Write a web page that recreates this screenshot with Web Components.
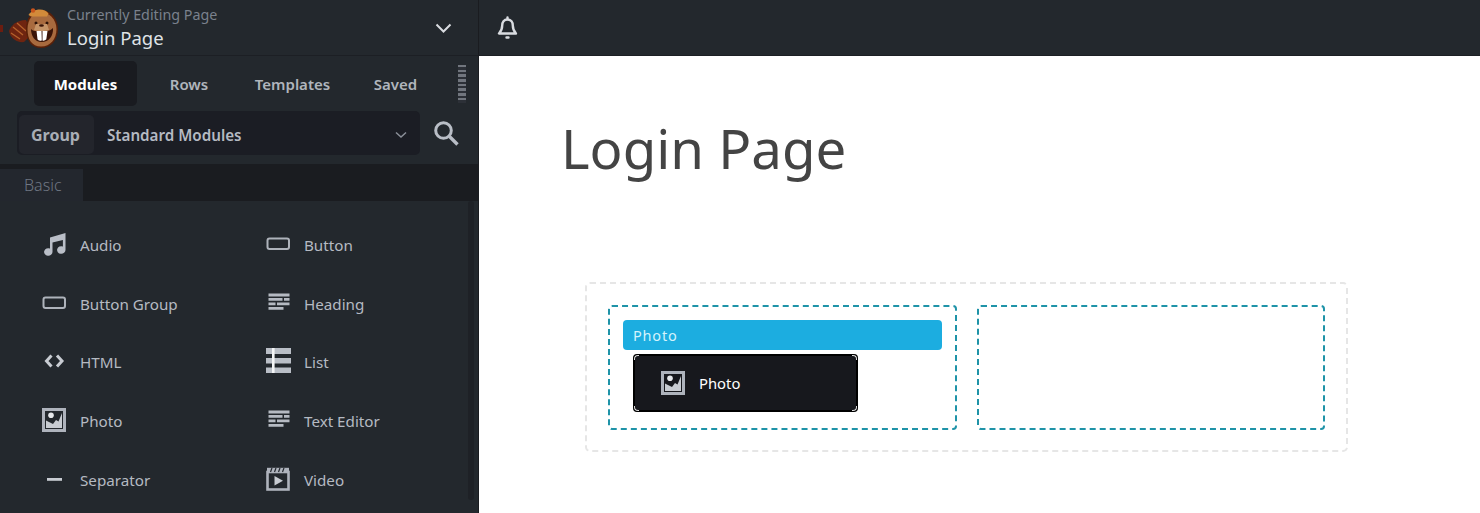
<!DOCTYPE html>
<html>
<head>
<meta charset="utf-8">
<title>Login Page</title>
<style>
  html, body { margin: 0; height: 513px; overflow: hidden; background: #fff; }
  body { font-family: "Noto Sans", sans-serif; }
</style>
</head>
<body>
<builder-app>
  <builder-sidebar slot="sidebar">
    <module-item icon="audio">Audio</module-item>
    <module-item icon="button">Button</module-item>
    <module-item icon="button">Button Group</module-item>
    <module-item icon="text">Heading</module-item>
    <module-item icon="html">HTML</module-item>
    <module-item icon="list">List</module-item>
    <module-item icon="photo">Photo</module-item>
    <module-item icon="text">Text Editor</module-item>
    <module-item icon="separator">Separator</module-item>
    <module-item icon="video">Video</module-item>
  </builder-sidebar>
  <page-canvas slot="canvas" title="Login Page">
    <col-box>
      <module-bar>Photo</module-bar>
      <drag-card>Photo</drag-card>
    </col-box>
    <col-box></col-box>
  </page-canvas>
</builder-app>

<script>
const ICONS = {
	audio: `<svg width="24" height="24" viewBox="0 0 24 24"><path fill="#b9bec7" d="M8 5.500 23.500 1v17a4.200 3.800 0 1 1-2.600-3.500V8L10.500 10.500V20a4.200 3.800 0 1 1-2.500-3.500z"/></svg>`,
	button: `<svg width="24" height="24" viewBox="0 0 24 24"><rect x="1.500" y="6.500" width="21.500" height="10.500" rx="2" fill="none" stroke="#aeb3bb" stroke-width="2"/></svg>`,
	text: `<svg width="24" height="24" viewBox="0 0 24 24" fill="#b5bac2"><path d="M2.500 2.500h21v3h-21zM2.500 7h14v2.800h-14zM18 7h5.500v2.800H18zM2.500 11.500h7v2.800h-7zM11 11.500h12.500v2.800H11zM2.500 16h15v2.800h-15z"/></svg>`,
	html: `<svg width="24" height="24" viewBox="0 0 24 24"><path fill="none" stroke="#c8ccd2" stroke-width="3" d="M9.500 6.500 4.500 12l5 5.500M15 6.500l5 5.500-5 5.500"/></svg>`,
	list: `<svg width="26" height="26" viewBox="0 0 26 26"><path fill="#b9bec6" d="M0 0h25v6H0zM0 10h25v5.500H0zM0 19.500h25V25H0z"/><path fill="#f4f5f6" d="M6 0h2.600v25H6z"/></svg>`,
	photo: `<svg width="24" height="24" viewBox="0 0 24 24"><rect x="1.500" y="1.500" width="21" height="21" fill="none" stroke="#aeb3bc" stroke-width="3"/><path fill="#c8ccd2" d="M4 12.500l3 1.500 4 2 3-4 2.500 1.500L20 5v15H4z"/><circle cx="9" cy="7.300" r="2.800" fill="#e6e8eb"/></svg>`,
	separator: `<svg width="24" height="24" viewBox="0 0 24 24"><rect x="5" y="11" width="15" height="2.800" fill="#c8ccd2"/></svg>`,
	video: `<svg width="24" height="24" viewBox="0 0 24 24"><rect x="1.500" y="5" width="21" height="17.500" fill="none" stroke="#aeb3bc" stroke-width="2.600"/><path fill="#aeb3bc" d="M1 .8h22v5H1z"/><path stroke="#23282d" stroke-width="1.200" d="M6 1l-1.500 4M10 1 8.500 5M14 1l-1.500 4M18 1l-1.500 4"/><path fill="#c8ccd2" d="M8.500 9 17 13.700l-8.500 4.800z"/></svg>`
};

class BuilderApp extends HTMLElement {
	constructor() {
		super();
		this.attachShadow({ mode: "open" });
		this.shadowRoot.innerHTML = `
      <style>
        :host {
          display: grid;
          grid-template-columns: 479px 1fr;
          grid-template-rows: 56px 457px;
          width: 1480px;
          height: 513px;
        }
        #top {
          grid-column: 2;
          grid-row: 1;
          background: #23282d;
          border-bottom: 1px solid #1c1f24;
          display: flex;
          align-items: center;
          padding-left: 17px;
          box-sizing: border-box;
        }
        svg { display: block; }
        ::slotted([slot="sidebar"]) { grid-column: 1; grid-row: 1 / 3; }
        ::slotted([slot="canvas"]) { grid-column: 2; grid-row: 2; }
      </style>
      <slot name="sidebar"></slot>
      <div id="top">
        <svg width="23" height="24" viewBox="0 0 23 24" fill="none" stroke="#d9dce0" stroke-width="2.400" stroke-linecap="round">
          <path d="M11.500 3.500c-3.600 0-5.300 2.700-5.300 6 0 4-1.300 6-3.200 8h17c-1.900-2-3.200-4-3.200-8 0-3.300-1.700-6-5.300-6z" stroke-linejoin="round"/>
          <path d="M11.500 1.500v1.500M10.500 21.500h2"/>
        </svg>
      </div>
      <slot name="canvas"></slot>
    `;
	}
}

class BuilderSidebar extends HTMLElement {
	constructor() {
		super();
		this.attachShadow({ mode: "open" });
		this.shadowRoot.innerHTML = `
      <style>
        :host {
          display: flex;
          flex-direction: column;
          background: #23282d;
          border-right: 1px solid #1a1c20;
          color: #b5bac2;
          overflow: hidden;
          font-family: "Noto Sans", sans-serif;
        }
        svg { display: block; flex: none; }

        /* header */
        #head {
          height: 55px;
          flex: none;
          display: flex;
          align-items: center;
          border-bottom: 1px solid #1c1f24;
        }
        #names { margin-left: 3px; flex: 1; padding-top: 1px; }
        #names small { display: block; font-size: 14.300px; line-height: 17px; color: #7a818c; }
        #names b { display: block; margin-top: 2px; font-weight: 400; font-size: 18.500px; line-height: 26px; color: #dfe2e6; }
        #arrow { margin-right: 26px; }

        /* tabs */
        #tabs {
          height: 45px;
          margin-top: 5px;
          padding-left: 34px;
          flex: none;
          display: flex;
          align-items: stretch;
          font-size: 15px;
          font-weight: 600;
        }
        #tabs span { display: flex; align-items: center; justify-content: center; color: #b0b5bc; }
        #tabs .on { width: 103px; background: #191b20; border-radius: 5px; color: #fff; font-weight: 700; }
        #tabs .t1 { width: 104px; }
        #tabs .t2 { width: 103px; }
        #tabs .t3 { width: 103px; }
        #handle {
          width: 8px;
          height: 38px;
          margin: 4px 0 0 11px;
          background: repeating-linear-gradient(#71767e 0 2.500px, #2c3037 2.500px 4.700px);
        }

        /* group select */
        #filter {
          flex: none;
          display: flex;
          align-items: center;
          margin-top: 5px;
          padding-left: 17px;
          height: 44px;
        }
        #select {
          width: 403px;
          height: 44px;
          background: #1b1d24;
          border-radius: 5px;
          display: flex;
          align-items: center;
          box-sizing: border-box;
          padding: 3px 13px 0 2px;
          font-size: 15.200px;
          font-weight: 600;
          color: #b5bac2;
        }
        #group {
          width: 73px;
          height: 39px;
          padding-right: 2px;
          display: flex;
          align-items: center;
          justify-content: center;
          background: #23252c;
          border-radius: 5px;
          font-size: 16px;
          font-weight: 700;
          color: #a9aeb6;
        }
        #select em { font-style: normal; flex: 1; margin-left: 13px; }
        #search { margin-left: 12px; }

        /* category tabs */
        #cats {
          flex: none;
          margin-top: 9px;
          height: 37px;
          background: #1a1c20;
          display: flex;
          align-items: flex-end;
        }
        #cats span {
          width: 59px;
          height: 32px;
          padding-left: 24px;
          background: #23272e;
          font-size: 16px;
          font-weight: 300;
          line-height: 32px;
          color: #6f7682;
        }

        /* module list */
        #body { flex: 1; display: flex; position: relative; }
        #grid {
          display: grid;
          grid-template-columns: 224px 224px;
          grid-auto-rows: 58.600px;
          padding: 14px 0 0 30px;
          align-content: start;
        }
        #bar {
          position: absolute;
          left: 468px;
          top: 0;
          width: 6px;
          height: 299px;
          background: #1e2126;
          border-radius: 3px;
        }
      </style>
      <div id="head">
        <svg id="logo" width="64" height="56" viewBox="0 0 64 56">
          <rect x="0" y="25" width="3" height="7" fill="#6b1d10"/>
          <path fill="#6e2410" d="M9 31c2-6 8-11 17-11l6 14-8 8c-7 1-14-4-15-11z"/>
          <path stroke="#b5622c" stroke-width="1.300" fill="none" d="M13 27l10 8M17 23l9 8M11 33l9 6"/>
          <path fill="#5a2008" d="M26 29c0-11 6-19 15-19s17 8 17 19c0 11-7 19-17 19S26 40 26 29z"/>
          <path fill="#a86a3e" d="M27.500 29c0-10 6-17 13.500-17s15.500 7 15.500 17c0 10-6 17.500-15.500 17.500S27.500 39 27.500 29z"/>
          <path fill="#d28a3a" d="M28.500 15c3-6 16-8 20-1.500l-1.500 3H31z"/>
          <circle cx="33" cy="10.500" r="2.200" fill="#c9541c"/>
          <circle cx="36" cy="23" r="1.500" fill="#2b1006"/>
          <circle cx="47" cy="23" r="1.500" fill="#2b1006"/>
          <path fill="#c59468" d="M36 24h11l2 6c-4 1.500-11 1.500-15 0z"/>
          <ellipse cx="41.500" cy="25.500" rx="2.400" ry="1.300" fill="#3a1408"/>
          <path fill="#3a1408" d="M31 29c2 2 4 2 5 2h11c2 0 4-1 6-3 .5 8-4 14-11.500 14C35 42 31 36 31 29z"/>
          <path fill="#fff" d="M36.500 31h5l.300 9.500c-2 .7-3.800 0-4.300-1.200zM42.500 31h5l-1.200 8.300c-.8 1.300-3 1.700-3.800 1.200z"/>
        </svg>
        <div id="names">
          <small>Currently Editing Page</small>
          <b>Login Page</b>
        </div>
        <svg id="arrow" width="17" height="10" viewBox="0 0 17 10"><path d="M1.500 1.500 8.500 8.500l7-7" fill="none" stroke="#d9dce0" stroke-width="2"/></svg>
      </div>
      <div id="tabs">
        <span class="on">Modules</span>
        <span class="t1">Rows</span>
        <span class="t2">Templates</span>
        <span class="t3">Saved</span>
        <div id="handle"></div>
      </div>
      <div id="filter">
        <div id="select">
          <span id="group">Group</span>
          <em>Standard Modules</em>
          <svg width="12" height="8" viewBox="0 0 12 8"><path d="M1 1.500 6 6l5-4.500" fill="none" stroke="#8b9099" stroke-width="1.500"/></svg>
        </div>
        <svg id="search" width="28" height="28" viewBox="0 0 28 28" fill="none" stroke="#b9bec6" stroke-width="3">
          <circle cx="11.500" cy="11.500" r="7.800"/><path d="M17.500 17.500l8 8" stroke-width="3.400"/>
        </svg>
      </div>
      <div id="cats"><span>Basic</span></div>
      <div id="body">
        <div id="grid"><slot></slot></div>
        <div id="bar"></div>
      </div>
    `;
	}
}

class ModuleItem extends HTMLElement {
	constructor() {
		super();
		this.attachShadow({ mode: "open" });
		this.shadowRoot.innerHTML = `
      <style>
        :host {
          display: flex;
          align-items: center;
          font-size: 15.200px;
          color: #b5bac2;
          font-family: "Noto Sans", sans-serif;
        }
        #icon { width: 50px; height: 26px; display: flex; align-items: center; flex: none; padding-left: 12px; box-sizing: border-box; }
        #label { padding-top: 2px; }
      </style>
      <div id="icon"></div>
      <span id="label"><slot></slot></span>
    `;
	}

	connectedCallback() {
		const name = this.getAttribute("icon") || "button";
		this.shadowRoot.querySelector("#icon").innerHTML = ICONS[name];
	}
}

class PageCanvas extends HTMLElement {
	constructor() {
		super();
		this.attachShadow({ mode: "open" });
		this.shadowRoot.innerHTML = `
      <style>
        :host {
          display: block;
          background: #fff;
          padding: 0 0 0 83px;
        }
        h1 {
          margin: 0 0 0 -1px;
          padding-top: 53px;
          height: 80px;
          font-family: "Noto Sans", sans-serif;
          font-size: 54.600px;
          line-height: 78px;
          font-weight: 400;
          color: #444;
        }
        #row {
          margin: 93px 0 0 23px;
          width: 763px;
          height: 170px;
          box-sizing: border-box;
          border: 2px dashed #e6e6e6;
          border-radius: 5px;
          padding: 21px;
          display: grid;
          grid-template-columns: 349px 348px;
          column-gap: 20px;
        }
      </style>
      <h1 id="title"></h1>
      <div id="row"><slot></slot></div>
    `;
	}

	connectedCallback() {
		this.shadowRoot.querySelector("#title").textContent = this.getAttribute("title") || "";
	}
}

class ColBox extends HTMLElement {
	constructor() {
		super();
		this.attachShadow({ mode: "open" });
		this.shadowRoot.innerHTML = `
      <style>
        :host {
          display: block;
          height: 125px;
          box-sizing: border-box;
          border: 2px dashed #1f93a8;
          border-radius: 4px;
          padding: 13px;
        }
      </style>
      <slot></slot>
    `;
	}
}

class ModuleBar extends HTMLElement {
	constructor() {
		super();
		this.attachShadow({ mode: "open" });
		this.shadowRoot.innerHTML = `
      <style>
        :host {
          display: block;
          height: 30px;
          line-height: 30px;
          padding-left: 10px;
          background: #1cade0;
          border-radius: 4px;
          color: #d4f3fc;
          font-family: "Noto Sans", sans-serif;
          font-size: 14.500px;
          letter-spacing: 0.800px;
        }
      </style>
      <slot></slot>
    `;
	}
}

class DragCard extends HTMLElement {
	constructor() {
		super();
		this.attachShadow({ mode: "open" });
		this.shadowRoot.innerHTML = `
      <style>
        :host {
          display: flex;
          align-items: center;
          width: 225px;
          height: 58px;
          margin: 4px 0 0 10px;
          box-sizing: border-box;
          background: #17181d;
          border: 2px solid #000;
          border-radius: 4px;
          padding-left: 26px;
          color: #fff;
          font-family: "Noto Sans", sans-serif;
          font-size: 14.800px;
          position: relative;
        }
        #icon { margin-right: 14px; }
        svg { display: block; }
        i { position: absolute; width: 4px; height: 4px; border: 0 solid #ddd; }
        .a { left: -1px; top: -1px; border-width: 1px 0 0 1px; border-top-left-radius: 4px; }
        .b { right: -1px; top: -1px; border-width: 1px 1px 0 0; border-top-right-radius: 4px; }
        .c { left: -1px; bottom: -1px; border-width: 0 0 1px 1px; border-bottom-left-radius: 4px; }
        .d { right: -1px; bottom: -1px; border-width: 0 1px 1px 0; border-bottom-right-radius: 4px; }
      </style>
      <i class="a"></i><i class="b"></i><i class="c"></i><i class="d"></i>
      <div id="icon">${ICONS.photo}</div>
      <slot></slot>
    `;
	}
}

customElements.define("builder-app", BuilderApp);
customElements.define("builder-sidebar", BuilderSidebar);
customElements.define("module-item", ModuleItem);
customElements.define("page-canvas", PageCanvas);
customElements.define("col-box", ColBox);
customElements.define("module-bar", ModuleBar);
customElements.define("drag-card", DragCard);
</script>
</body>
</html>
